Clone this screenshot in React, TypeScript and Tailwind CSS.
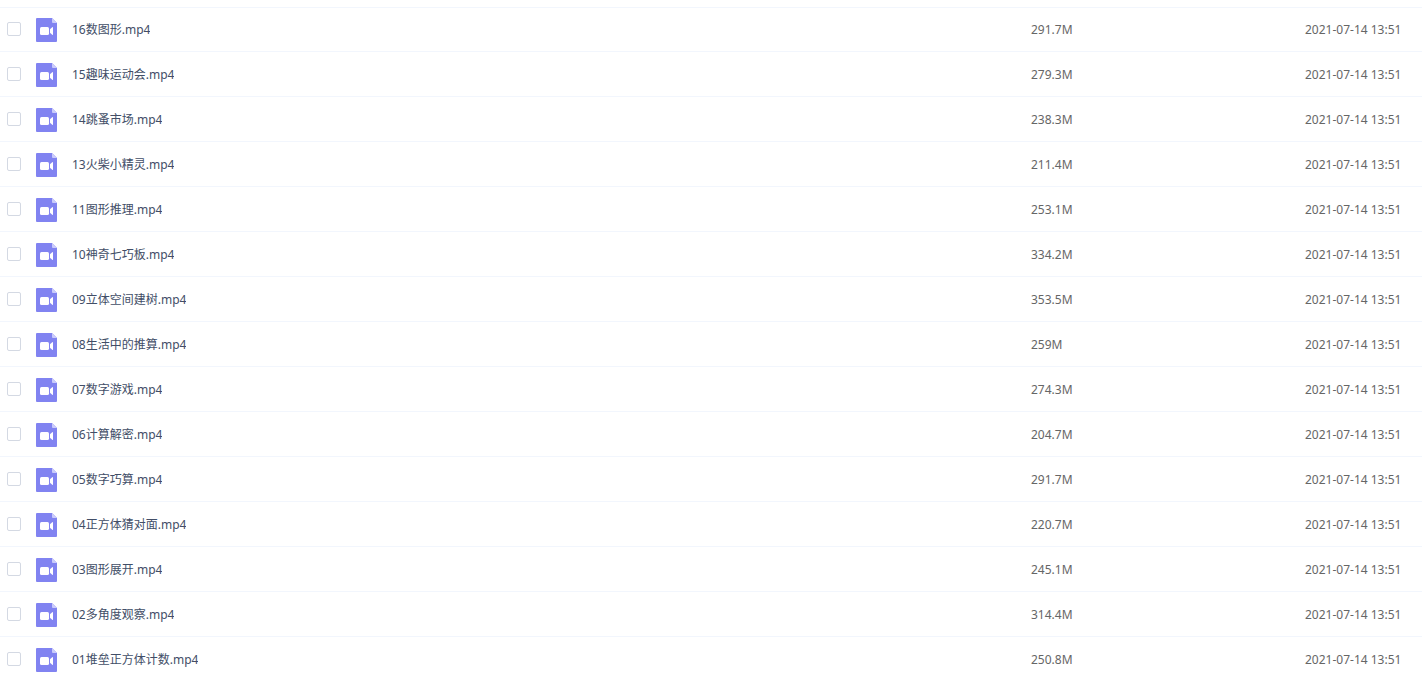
import { useState } from "react";

interface VideoFile {
    name: string;
    size: string;
    modified: string;
}

const files: VideoFile[] = [
    { name: "16数图形.mp4", size: "291.7M", modified: "2021-07-14 13:51" },
    { name: "15趣味运动会.mp4", size: "279.3M", modified: "2021-07-14 13:51" },
    { name: "14跳蚤市场.mp4", size: "238.3M", modified: "2021-07-14 13:51" },
    { name: "13火柴小精灵.mp4", size: "211.4M", modified: "2021-07-14 13:51" },
    { name: "11图形推理.mp4", size: "253.1M", modified: "2021-07-14 13:51" },
    { name: "10神奇七巧板.mp4", size: "334.2M", modified: "2021-07-14 13:51" },
    { name: "09立体空间建树.mp4", size: "353.5M", modified: "2021-07-14 13:51" },
    { name: "08生活中的推算.mp4", size: "259M", modified: "2021-07-14 13:51" },
    { name: "07数字游戏.mp4", size: "274.3M", modified: "2021-07-14 13:51" },
    { name: "06计算解密.mp4", size: "204.7M", modified: "2021-07-14 13:51" },
    { name: "05数字巧算.mp4", size: "291.7M", modified: "2021-07-14 13:51" },
    { name: "04正方体猜对面.mp4", size: "220.7M", modified: "2021-07-14 13:51" },
    { name: "03图形展开.mp4", size: "245.1M", modified: "2021-07-14 13:51" },
    { name: "02多角度观察.mp4", size: "314.4M", modified: "2021-07-14 13:51" },
    { name: "01堆垒正方体计数.mp4", size: "250.8M", modified: "2021-07-14 13:51" },
];

const VideoIcon = () => (
    <svg width="21" height="24" viewBox="0 0 21 24" className="shrink-0" aria-hidden="true">
        <path d="M1 0H16L21 5V23a1 1 0 0 1-1 1H1a1 1 0 0 1-1-1V1a1 1 0 0 1 1-1Z" fill="#8183f1" />
        <path d="M16 0L21 5H17a1 1 0 0 1-1-1Z" fill="#cbccfb" />
        <rect x="4" y="9" width="9" height="8" rx="1.5" fill="#fff" />
        <path d="M17 9.6v6.8c0 .5-.4.7-.8.4L14 14.7v-3.4l2.2-2.1c.4-.3.8-.1.8.4Z" fill="#fff" />
    </svg>
);

interface FileRowProps {
    file: VideoFile;
    checked: boolean;
    onToggle: () => void;
}

const FileRow = ({ file, checked, onToggle }: FileRowProps) => (
    <tr className="group h-[45px] *:border-b *:border-[#f2f6fd] first:*:border-t hover:bg-[#f7f9fc]">
        <td className="p-0 group-first:pb-px">
            <input
                type="checkbox"
                checked={checked}
                onChange={onToggle}
                aria-label={file.name}
                className="ml-[7px] block size-3.5 appearance-none rounded-xs border border-[#d4d9e3] bg-white checked:border-[#8183f1] checked:bg-[#8183f1]"
            />
        </td>
        <td className="p-0 pt-px">
            <div className="flex items-center gap-[15px]">
                <VideoIcon />
                <span className="truncate text-[#424e67]">{file.name}</span>
            </div>
        </td>
        <td className="p-0 pt-px">{file.size}</td>
        <td className="p-0 pt-px whitespace-nowrap">{file.modified}</td>
    </tr>
);

const App = () => {
    const [selected, setSelected] = useState<string[]>([]);

    const toggle = (name: string) => {
        setSelected((prev) => (prev.includes(name) ? prev.filter((n) => n !== name) : [...prev, name]));
    };

    return (
        <main className="bg-white pt-[7px] font-['Noto_Sans','Noto_Sans_CJK_SC',sans-serif] text-xs text-[#666]">
            <table className="w-full table-fixed border-separate border-spacing-0 text-left">
                <colgroup>
                    <col className="w-9" />
                    <col />
                    <col className="w-[274px]" />
                    <col className="w-[117px]" />
                </colgroup>
                <tbody>
                    {files.map((file) => (
                        <FileRow
                            key={file.name}
                            file={file}
                            checked={selected.includes(file.name)}
                            onToggle={() => toggle(file.name)}
                        />
                    ))}
                </tbody>
            </table>
        </main>
    );
};

export default App;
